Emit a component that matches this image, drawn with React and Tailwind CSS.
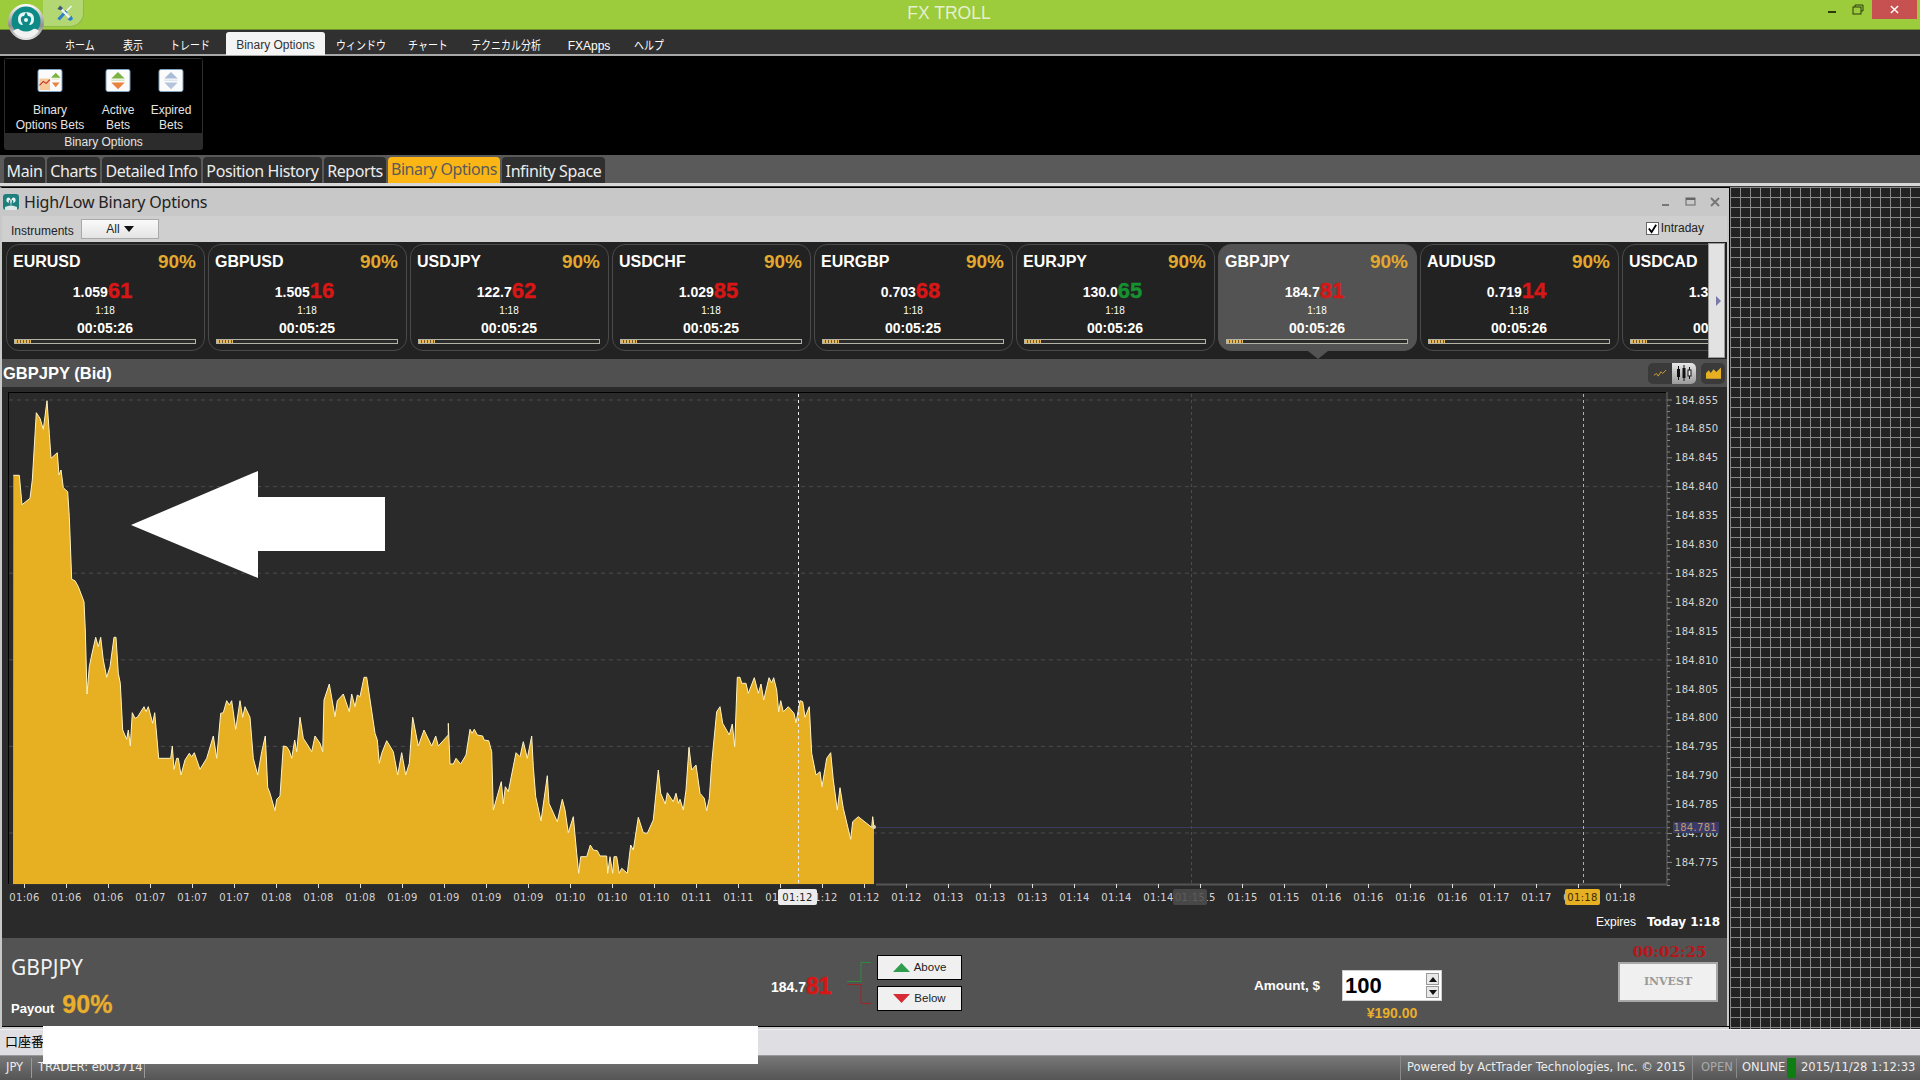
import React from "react";

const Z8 = [[40,256],[58,256],[66,344],[90,325],[97,270],[109,68],[120,85],[130,118],[141,32],[148,130],[153,205],[172,188],[177,255],[183,240],[190,293],[203,305],[208,380],[215,568],[225,572],[235,590],[252,635],[256,720],[261,912],[268,830],[275,795],[287,742],[295,770],[302,742],[310,810],[320,862],[330,830],[342,742],[348,742],[355,850],[361,880],[368,1020],[380,1048],[385,1020],[391,1068],[397,968],[405,985],[412,982],[432,950],[438,965],[445,950],[458,1000],[464,968],[476,1105],[512,1105],[517,1068],[522,1138],[530,1105],[535,1105],[543,1155],[555,1110],[568,1090],[575,1100],[583,1088],[600,1138],[620,1105],[640,1038],[650,1105],[662,970],[670,968],[680,932],[688,945],[695,932],[707,1018],[720,932],[728,982],[735,950],[750,982],[760,1105],[773,1155],[785,1085],[796,1038],[803,1192],[810,1210],[825,1262],[830,1228],[840,1218],[850,1068],[860,1070],[868,1082],[875,1105],[884,1050],[890,1085],[900,982],[910,1045],[925,1068],[935,1085],[945,1038],[960,1060],[968,1085],[972,930],[988,882],[1005,980],[1012,932],[1030,912],[1048,965],[1055,912],[1065,950],[1072,915],[1080,920],[1092,862],[1100,862],[1125,1030],[1132,1050],[1138,1120],[1145,1090],[1160,1052],[1180,1085],[1193,1155],[1205,1088],[1217,1155],[1228,1120],[1238,982],[1255,1068],[1272,1020],[1295,1068],[1307,1038],[1315,1068],[1345,1035],[1345,1000],[1350,1122],[1360,1122],[1368,1105],[1380,1120]];
const Z9 = [[62,372],[78,345],[90,268],[96,280],[103,268],[112,285],[128,288],[132,300],[146,302],[155,335],[160,510],[184,425],[190,492],[196,440],[205,455],[228,338],[240,350],[250,305],[262,355],[275,288],[280,380],[287,470],[303,543],[322,407],[327,490],[352,545],[367,478],[375,510],[385,578],[400,530],[410,640],[416,700],[422,650],[440,650],[451,615],[460,630],[472,632],[480,648],[500,648],[503,700],[510,650],[518,700],[522,650],[530,650],[538,700],[545,685],[562,700],[572,615],[580,630],[595,532],[610,578],[622,580],[640,540],[655,390],[662,460],[676,492],[682,458],[700,485],[708,460],[715,490],[720,478],[730,510],[738,450],[747,322],[755,390],[768,375],[780,460],[793,475],[800,512],[808,475],[815,370],[830,215],[840,200],[848,250],[868,285],[877,252],[884,320],[892,112],[900,112],[905,130],[918,130],[925,160],[943,113],[955,160],[963,132],[971,180],[987,113],[995,128],[1001,113],[1010,150],[1016,215],[1022,182],[1030,215],[1045,200],[1062,220],[1068,248],[1080,182],[1088,185],[1095,232],[1108,200],[1115,340],[1128,405],[1140,395],[1146,440],[1160,355],[1172,338],[1180,420],[1192,510],[1200,443],[1210,505],[1232,598],[1238,545],[1255,530],[1295,562],[1298,530],[1302,562]];
const LINE = [
  ...Z8.map(([x, y]) => [x / 3, 390 + y / 3]),
  ...Z9.map(([x, y]) => [440 + x / 3, 640 + y / 3]),
];
const linePts = LINE.map((p) => p.map((n) => n.toFixed(1)).join(",")).join(" ");
const areaPts = `13,884 ${linePts} 874,884`;

const XLABELS = ["01:06","01:06","01:06","01:07","01:07","01:07","01:08","01:08","01:08","01:09","01:09","01:09","01:09","01:10","01:10","01:10","01:11","01:11","01:11","01:12","01:12","01:12","01:13","01:13","01:13","01:14","01:14","01:14","01:15","01:15","01:15","01:16","01:16","01:16","01:16","01:17","01:17","01:17","01:18"];
const YLABELS = Array.from({ length: 17 }, (_, i) => (184.855 - i * 0.005).toFixed(3));

const CARDS = [
  ["EURUSD", "1.059", "61", "00:05:26"],
  ["GBPUSD", "1.505", "16", "00:05:25"],
  ["USDJPY", "122.7", "62", "00:05:25"],
  ["USDCHF", "1.029", "85", "00:05:25"],
  ["EURGBP", "0.703", "68", "00:05:25"],
  ["EURJPY", "130.0", "65", "00:05:26", "green"],
  ["GBPJPY", "184.7", "81", "00:05:26", "active"],
  ["AUDUSD", "0.719", "14", "00:05:26"],
  ["USDCAD", "1.337", "42", "00:05:26"],
];

const MENU = [
  ["ホーム", "w-[48px]", true],
  ["表示", "w-[58px]", true],
  ["トレード", "w-[56px] mr-[8px]", true],
  ["Binary Options", "w-[99px] h-[23px] mt-[2px] pt-[3px] bg-[#f4f4f4] text-[#333] rounded-t-[3px]"],
  ["ウィンドウ", "w-[72px]", true],
  ["チャート", "w-[62px]", true],
  ["テクニカル分析", "w-[94px]", true],
  ["FXApps", "w-[72px]"],
  ["ヘルプ", "w-[48px]", true],
];

const TABS = [
  ["Main", "w-[41px]"],
  ["Charts", "w-[53px]"],
  ["Detailed Info", "w-[99px]"],
  ["Position History", "w-[119px]"],
  ["Reports", "w-[62px]"],
  ["Binary Options", "w-[112px]", true],
  ["Infinity Space", "w-[103px]"],
];

function Logo() {
  return (
    <svg viewBox="0 0 36 36" className="absolute left-[8px] top-[4px] z-20 w-[36px] h-[36px]">
      <defs>
        <linearGradient id="ring" x1="0" y1="0" x2="0" y2="1">
          <stop offset="0" stopColor="#ffffff" />
          <stop offset="0.6" stopColor="#8e8e8e" />
          <stop offset="1" stopColor="#e8e8e8" />
        </linearGradient>
      </defs>
      <circle cx="18" cy="18" r="18" fill="url(#ring)" />
      <circle cx="18" cy="17" r="14.5" fill="#0d8a86" />
      <path d="M5 27 Q10 23 12 26 Q18 29 24 26 Q27 23 31 27 Q26 34 18 34 Q10 34 5 27Z" fill="#f2f2f2" />
      <path d="M18 8 Q10 8 10 15 Q10 21 15 21 L13 17 Q12 12 16 12 Z" fill="#eaf6f5" />
      <path d="M18 8 Q26 8 26 15 Q26 21 21 21 L23 17 Q24 12 20 12 Z" fill="#eaf6f5" />
      <circle cx="18" cy="16" r="2" fill="#eaf6f5" />
    </svg>
  );
}

function Tools() {
  return (
    <svg viewBox="0 0 16 16" className="w-[16px] h-[16px] absolute left-[14px] top-[5px]">
      <path d="M1.5 14.5 L9.5 6" stroke="#2f80c8" strokeWidth="3.2" />
      <path d="M9.5 6 L14.5 1" stroke="#f0f4f8" strokeWidth="1.6" />
      <path d="M3 3 L13 13" stroke="#eef3f6" strokeWidth="2.4" />
      <path d="M0.5 4 L3 0.5 L6 3 L4 5.5Z" fill="#3f5a78" />
      <path d="M10.5 14.5 L14.5 10.5 L16 14 L13.5 16Z" fill="#2f80c8" />
    </svg>
  );
}

function RibbonIcon({ kind }) {
  const up = kind === "expired" ? "#a8bcd8" : "#7cb342";
  const down = kind === "expired" ? "#b4c4dc" : "#e8823c";
  return (
    <svg viewBox="0 0 26 24" className="w-[26px] h-[24px]">
      <rect x="0.5" y="0.5" width="25" height="23" rx="2" fill="#fbfbfb" stroke="#7ea6c4" />
      {kind === "chart" ? (
        <>
          <rect x="2" y="10" width="11" height="12" fill="#f6c99a" />
          <path d="M2 17 L6 13 L9 15 L13 11" stroke="#c8321e" strokeWidth="1.2" fill="none" />
          <path d="M14 9 L19 4 L24 9Z" fill={up} />
          <path d="M15 10 H23 V11 H15Z" fill="#d9e6c0" />
          <path d="M15 14 L19 19 L23 14Z" fill={down} />
        </>
      ) : (
        <>
          <path d="M6 10 L13 3 L20 10Z" fill={up} />
          <rect x="6" y="11" width="14" height="1.5" fill={kind === "expired" ? "#dce4f0" : "#d9e6c0"} />
          <path d="M6 14 L13 21 L20 14Z" fill={down} />
        </>
      )}
    </svg>
  );
}

function Card({ sym, base, big, time, mode }) {
  const active = mode === "active";
  return (
    <div
      className={`w-[199px] h-[107px] shrink-0 rounded-[13px] border px-[7.5px] pt-[7px] ${
        active ? "bg-[#535353] border-[#535353]" : "bg-[#222222] border-[#4a4a4a]"
      }`}
    >
      <div className="flex items-center justify-between h-[20px]">
        <span className="text-[16px] font-bold text-white -ml-[1px]">{sym}</span>
        <span className="text-[19px] font-bold text-[#e3a92f]">90%</span>
      </div>
      <div className="flex items-center justify-center h-[24px] mt-[7px] pr-[5px] font-bold">
        <span className="text-[14px] text-white mt-[3px]">{base}</span>
        <span
          className={`text-[22px] leading-none ${
            mode === "green"
              ? "text-[#17912f] [-webkit-text-stroke:0.4px_#17912f]"
              : "text-[#d81616] [-webkit-text-stroke:0.4px_#d81616]"
          }`}
        >
          {big}
        </span>
      </div>
      <div className="h-[12px] mt-[2px] text-center text-[10px] leading-[12px] text-white">1:18</div>
      <div className="h-[16px] mt-[3px] text-center text-[14px] leading-[16px] font-bold text-white">{time}</div>
      <div className="h-[5px] mt-[3px] border border-[#b3b3a5] bg-[#2a2a2a]">
        <div className="h-full w-[16px] bg-[repeating-linear-gradient(90deg,#e9b85a_0_2px,#6b5a30_2px_3px)]" />
      </div>
    </div>
  );
}

function ChartCanvas() {
  const F = { fontFamily: '"DejaVu Sans", sans-serif', fontSize: 10, letterSpacing: 0.3 };
  return (
    <svg viewBox="2 387 1725 551" className="absolute inset-0 w-full h-full">
      {[400, 486.6, 573.2, 659.8, 746.4, 833].map((y) => (
        <line key={y} x1="9" x2="1666" y1={y} y2={y} stroke="#4a4a4a" strokeDasharray="4 4" />
      ))}
      <line x1="1191.5" x2="1191.5" y1="394" y2="884" stroke="#4c4c4c" strokeDasharray="3 3" />
      <line x1="876" x2="1666" y1="827.5" y2="827.5" stroke="#3b3b5e" />
      <polygon points={areaPts} fill="#e7af22" />
      <polyline points={linePts} fill="none" stroke="#fff3c4" strokeWidth="1" />
      <circle cx="874" cy="827" r="2" fill="#e0d8c0" />
      <line x1="798.5" x2="798.5" y1="394" y2="884" stroke="#f0f0f0" strokeDasharray="3 3" />
      <line x1="1583.5" x2="1583.5" y1="394" y2="884" stroke="#e7af22" strokeDasharray="3 3" />
      <polygon points="131,525 258,471 258,497 385,497 385,551 258,551 258,578" fill="#ffffff" />
      <line x1="8" x2="1666" y1="392.5" y2="392.5" stroke="#000" />
      <line x1="8.5" x2="8.5" y1="392" y2="884" stroke="#000" />
      <line x1="1667" x2="1667" y1="392" y2="885" stroke="#555" strokeWidth="1.5" />
      <line x1="876" x2="1667" y1="884.5" y2="884.5" stroke="#555" strokeWidth="2" />
      <line x1="9" x2="874" y1="884.5" y2="884.5" stroke="#333" />
      {Array.from({ length: 85 }, (_, i) => (
        <line key={i} x1="1667" x2={i % 5 === 0 ? 1672 : 1670} y1={400 + i * 5.78} y2={400 + i * 5.78} stroke="#888" />
      ))}
      {YLABELS.map((t, i) => (
        <text key={t} x="1675" y={403.5 + i * 28.9} fill="#d4d4d4" style={F}>{t}</text>
      ))}
      <rect x="1673" y="822" width="46" height="11" fill="#3a3a68" />
      <text x="1673.5" y="831" fill="#c4996a" style={F}>184.781</text>
      {XLABELS.map((t, i) => (
        <g key={i}>
          <line x1={24.5 + i * 42} x2={24.5 + i * 42} y1="884" y2="888" stroke="#ddd" />
          <text x={24.5 + i * 42} y="900.5" textAnchor="middle" fill="#d4d4d4" style={F}>{t}</text>
        </g>
      ))}
      <rect x="778" y="889" width="39" height="16" rx="2" fill="#ececec" />
      <text x="797.5" y="900.5" textAnchor="middle" fill="#222" style={F}>01:12</text>
      <rect x="1173" y="889" width="34" height="16" rx="2" fill="#484848" />
      <text x="1190" y="900.5" textAnchor="middle" fill="#5e5e5e" style={F}>01:15</text>
      <rect x="1565" y="889" width="35" height="16" rx="2" fill="#e7af22" />
      <text x="1582.5" y="900.5" textAnchor="middle" fill="#3a2c08" style={F}>01:18</text>
    </svg>
  );
}

function HeaderIcons() {
  return (
    <div className="flex items-center gap-[5px] pr-[2px]">
      <div className="flex h-[21px] rounded-[5px] overflow-hidden">
        <div className="w-[24px] bg-[#3a3a3a] flex items-center justify-center">
          <svg viewBox="0 0 16 10" className="w-[14px] h-[9px]">
            <path d="M1 7 L4 5 L6 8 L9 3 L11 5 L15 1" stroke="#e0a92e" fill="none" strokeWidth="1" />
          </svg>
        </div>
        <div className="w-[24px] bg-gradient-to-b from-[#e8e8e8] to-[#9a9a9a] flex items-center justify-center">
          <svg viewBox="0 0 16 16" className="w-[16px] h-[16px]">
            <path d="M2.5 1 V15 M8 0 V16 M13.5 2 V14" stroke="#111" />
            <rect x="1" y="4" width="3" height="8" fill="#111" />
            <rect x="6.5" y="3" width="3" height="10" fill="#111" />
            <rect x="12" y="5" width="3" height="6" fill="#eee" stroke="#111" />
          </svg>
        </div>
      </div>
      <div className="w-[24px] h-[21px] rounded-[5px] bg-[#3a3a3a] flex items-center justify-center">
        <svg viewBox="0 0 16 12" className="w-[15px] h-[12px]">
          <path d="M0 6 L3 3 L5 6 L8 2 L11 5 L16 0 V12 H0Z" fill="#e7af22" />
        </svg>
      </div>
    </div>
  );
}

export default function App() {
  const sans = { fontFamily: '"Liberation Sans", "Noto Sans CJK JP", sans-serif' };
  const ui = { fontFamily: '"Noto Sans", "Noto Sans CJK JP", sans-serif' };
  const dv = { fontFamily: '"DejaVu Sans", "Noto Sans CJK JP", sans-serif' };
  const serif = { fontFamily: '"DejaVu Serif", serif' };
  return (
    <div className="relative w-[1920px] h-[1080px] overflow-hidden flex flex-col bg-black" style={sans}>
      {/* title bar */}
      <div className="relative h-[30px] shrink-0 flex bg-[#9ccb3c] border-b border-[#6d8f2a]">
        <Logo />
        <div className="absolute left-[43px] top-0 w-[41px] h-[27px] bg-[#b3d873] border-r border-b border-[#8fb84a] rounded-br-[14px]">
          <Tools />
        </div>
        <div className="w-[100px]" />
        <div className="flex-1 text-center text-[17.5px] leading-[27px] text-[#e6f0cc]">FX TROLL</div>
        <div className="w-[122px] flex justify-end items-start">
          <svg viewBox="0 0 36 20" className="w-[36px] h-[20px] mr-[8px]">
            <rect x="0" y="11" width="8" height="2" fill="#2c3a10" />
            <rect x="25" y="7" width="8" height="7" fill="none" stroke="#2c3a10" />
            <path d="M27 7 V5 H35 V11 H33" fill="none" stroke="#2c3a10" />
          </svg>
          <div className="w-[45px] h-[19px] mr-[3px] bg-[#c75050] flex items-center justify-center">
            <svg viewBox="0 0 10 10" className="w-[9px] h-[9px]">
              <path d="M1 1 L9 9 M9 1 L1 9" stroke="#fff" strokeWidth="1.6" />
            </svg>
          </div>
        </div>
      </div>

      {/* menu */}
      <div className="h-[26px] shrink-0 flex pl-[56px] bg-[#303030] border-b-2 border-[#a8a8a8] text-[12px] text-white">
        {MENU.map(([t, c, jp]) => (
          <div key={t} className={`${c} ${jp || t === "FXApps" ? "pt-[7px]" : ""} flex items-center justify-center whitespace-nowrap`}>
            {jp ? <span className="inline-block scale-x-[0.83]">{t}</span> : t}
          </div>
        ))}
      </div>

      {/* ribbon */}
      <div className="h-[99px] shrink-0 bg-black pt-[2px] pl-[4px]">
        <div className="w-[199px] h-[92px] rounded-[3px] bg-[#2c2c2c] p-[1px] flex flex-col text-[12px] leading-[15px] text-[#e4e4e4]">
          <div className="h-[74px] bg-black flex pl-[7px] pt-[10px]">
            {[
              ["chart", "w-[76px]", "Binary", "Options Bets"],
              ["active", "w-[60px]", "Active", "Bets"],
              ["expired", "w-[46px]", "Expired", "Bets"],
            ].map(([k, w, a, b]) => (
              <div key={k} className={`${w} flex flex-col items-center whitespace-nowrap`}>
                <RibbonIcon kind={k} />
                <div className="mt-[11px] text-center">{a}<br />{b}</div>
              </div>
            ))}
          </div>
          <div className="flex-1 text-center leading-[19px]">Binary Options</div>
        </div>
      </div>

      {/* tabs */}
      <div className="h-[31px] shrink-0 flex gap-[2px] pl-[4px] pt-[2px] bg-[#5a5a5a] border-b-[3px] border-[#d8d8d8] text-[16px]" style={ui}>
        {TABS.map(([t, w, on]) => (
          <div
            key={t}
            className={`${w} h-[26px] rounded-t-[4px] flex justify-center whitespace-nowrap tracking-[-0.4px] ${
              on ? "bg-[#fbb616] text-[#5a5a5a] items-start leading-[24px]" : "bg-[#2f2f2f] text-[#ececec] items-center pt-[2px]"
            }`}
          >
            {t}
          </div>
        ))}
      </div>
      <div className="h-[1px] shrink-0 bg-[#3a3a3a]" />

      {/* main */}
      <div className="flex-1 flex min-h-0">
        <div className="w-[1730px] shrink-0 flex flex-col border-t border-r border-black border-l-2 border-l-[#c8c8c8]">
          <div className="flex-1 min-h-0 flex flex-col border-r-2 border-[#c8c8c8] bg-[#2a2a2a]">
            {/* window title */}
            <div className="h-[28px] shrink-0 bg-[#c8c8c8] flex items-center pl-[1px] text-[#222]">
              <svg viewBox="0 0 16 16" className="w-[16px] h-[16px]">
                <rect width="16" height="16" rx="3" fill="#1f7f7c" />
                <path d="M4 4 Q7 2 8 7 Q9 2 12 4 Q14 8 10 9 Q11 6 9 6 L8 12 L7 6 Q5 6 6 9 Q2 8 4 4Z" fill="#e8f4f2" />
                <path d="M2 13 Q8 10 14 13 V16 H2Z" fill="#dfe8e8" />
              </svg>
              <span className="ml-[5px] text-[16px] tracking-[-0.2px] -mt-[1px]" style={ui}>High/Low Binary Options</span>
              <div className="ml-auto flex items-center pr-[7px]">
                <svg viewBox="0 0 58 10" className="w-[58px] h-[10px]">
                  <rect x="0" y="7" width="7" height="2" fill="#777" />
                  <rect x="24" y="1" width="9" height="7" fill="none" stroke="#666" />
                  <rect x="24" y="1" width="9" height="2" fill="#666" />
                  <path d="M49 1 L57 9 M57 1 L49 9" stroke="#777" strokeWidth="2" />
                </svg>
              </div>
            </div>
            {/* toolbar */}
            <div className="h-[26px] shrink-0 bg-[#cfcfcf] flex items-center pl-[9px] pr-[23px] text-[12px] text-[#222]">
              <span className="w-[57px] mt-[4px]">Instruments</span>
              <div className="ml-[13px] w-[78px] h-[20px] border border-[#a9a9a9] bg-gradient-to-b from-[#fafafa] to-[#e4e4e4] flex items-center justify-center gap-[4px]">
                <span>All</span>
                <svg viewBox="0 0 10 6" className="w-[10px] h-[6px]"><path d="M0 0 H10 L5 6Z" fill="#111" /></svg>
              </div>
              <div className="ml-auto flex items-center gap-[2px] -mt-[2px]">
                <span className="w-[13px] h-[13px] bg-white border border-[#666] flex items-center justify-center">
                  <svg viewBox="0 0 12 12" className="w-[11px] h-[11px]"><path d="M2 6 L5 10 L10 2" stroke="#000" strokeWidth="2" fill="none" /></svg>
                </span>
                <span>Intraday</span>
              </div>
            </div>
            {/* ticker */}
            <div className="relative h-[117px] shrink-0 bg-[#222222] flex">
              <div className="w-[1706px] shrink-0 overflow-hidden flex gap-[3px] pl-[3.5px] pt-[2px]">
                {CARDS.map(([s, b, g, t, m]) => (
                  <Card key={s} sym={s} base={b} big={g} time={t} mode={m} />
                ))}
              </div>
              <div className="w-[17px] h-[115px] mt-[1px] bg-[#e2e2e2] border border-[#9a9a9a] flex items-center justify-center">
                <svg viewBox="0 0 5 10" className="w-[5px] h-[10px] ml-[3px]"><path d="M0 0 L5 5 L0 10Z" fill="#7a7aa8" /></svg>
              </div>
              <svg viewBox="0 0 20 8" className="absolute left-[1306px] bottom-0 w-[20px] h-[8px]"><path d="M0 0 H20 L10 8Z" fill="#535353" /></svg>
            </div>
            {/* chart header */}
            <div className="h-[28px] shrink-0 bg-[#505050] flex items-center justify-between pl-[1px]">
              <span className="text-[16.5px] font-bold text-white mt-[1px]">GBPJPY (Bid)</span>
              <HeaderIcons />
            </div>
            {/* chart */}
            <div className="relative h-[551px] shrink-0 bg-[#2a2a2a]">
              <ChartCanvas />
              <div className="absolute right-[7px] bottom-[7px] flex items-center gap-[11px] text-white">
                <span className="text-[12px]">Expires</span>
                <span className="text-[12px] font-bold" style={dv}>Today 1:18</span>
              </div>
            </div>
            {/* order panel */}
            <div className="flex-1 bg-[#535353] flex text-white">
              <div className="w-[769px] pl-[9px] pt-[14px]">
                <div className="h-[30px] text-[21px] leading-[30px] text-[#f2f2f2]" style={ui}>GBPJPY</div>
                <div className="flex items-baseline gap-[8px] mt-[8px]">
                  <span className="text-[13px] font-bold">Payout</span>
                  <span className="text-[25px] leading-[28px] font-bold text-[#e9ae2c] [-webkit-text-stroke:0.3px_#e9ae2c]">90%</span>
                </div>
              </div>
              <div className="w-[62px] mt-[35px] h-[26px] flex items-center font-bold">
                <span className="text-[14px] mt-[2px]">184.7</span>
                <span className="text-[23px] text-[#d81616] [-webkit-text-stroke:0.4px_#d81616]">81</span>
              </div>
              <svg viewBox="0 0 24 44" className="w-[24px] h-[44px] ml-[14px] mt-[24px]">
                <path d="M0 19.5 H14 V0.5 H24" stroke="#2e8b3c" fill="none" />
                <path d="M0 22.5 H14 V41.5 H24" stroke="#a02626" fill="none" />
              </svg>
              <div className="ml-[6px] mt-[17px] w-[85px] flex flex-col gap-[6px] text-[11.5px] text-[#222]">
                <div className="h-[25px] bg-[#f0f0f0] border border-black flex items-center justify-center gap-[4px]">
                  <svg viewBox="0 0 17 9" className="w-[17px] h-[9px]"><path d="M0 9 L8.5 0 L17 9Z" fill="#2e9e4e" /></svg>
                  <span>Above</span>
                </div>
                <div className="h-[25px] bg-[#f0f0f0] border border-black flex items-center justify-center gap-[4px]">
                  <svg viewBox="0 0 17 9" className="w-[17px] h-[9px]"><path d="M0 0 L8.5 9 L17 0Z" fill="#d62b35" /></svg>
                  <span>Below</span>
                </div>
              </div>
              <div className="ml-[292px] w-[66px] mt-[39px] h-[18px] text-[13.5px] font-bold whitespace-nowrap leading-[18px]">Amount, $</div>
              <div className="ml-[22px] w-[100px] mt-[32px] flex flex-col items-center">
                <div className="w-full h-[31px] bg-white border border-[#cfcfcf] flex items-center justify-between pl-[2px] pr-[2px]">
                  <span className="text-[22px] font-bold text-black leading-none">100</span>
                  <div className="flex flex-col gap-[1px]">
                    <span className="w-[13px] h-[12px] bg-[#e8e8e8] border border-[#999] flex items-center justify-center">
                      <svg viewBox="0 0 8 5" className="w-[8px] h-[5px]"><path d="M0 5 L4 0 L8 5Z" fill="#111" /></svg>
                    </span>
                    <span className="w-[13px] h-[12px] bg-[#e8e8e8] border border-[#999] flex items-center justify-center">
                      <svg viewBox="0 0 8 5" className="w-[8px] h-[5px]"><path d="M0 0 L4 5 L8 0Z" fill="#111" /></svg>
                    </span>
                  </div>
                </div>
                <div className="mt-[5px] h-[14px] text-[14px] leading-[14px] font-bold text-[#e9ae2c]">¥190.00</div>
              </div>
              <div className="ml-[176px] w-[100px] mt-[5px] flex flex-col items-center">
                <div className="h-[18px] pl-[3px] text-[15px] leading-[18px] font-bold text-[#b21818]" style={serif}>00:02:25</div>
                <div className="mt-[1px] w-full h-[40px] bg-[#f0f0f0] border-2 border-[#a8a8a8] flex items-center justify-center text-[11px] font-bold text-[#9a9a9a]" style={serif}>INVEST</div>
              </div>
            </div>
          </div>
          <div className="h-[1px] shrink-0 bg-black" />
          <div className="h-[2px] shrink-0 bg-[#cfcfcf]" />
        </div>
        <div className="flex-1 bg-[#222222] bg-[linear-gradient(#8a8a8a_1px,transparent_1px),linear-gradient(90deg,#8a8a8a_1px,transparent_1px)] bg-[size:10px_10px]" />
      </div>

      {/* status row */}
      <div className="h-[26px] shrink-0 bg-[#dfdfe3] border-t border-[#efefef] flex items-center pl-[5px] pb-[2px] text-[13px] text-black">
        口座番号
      </div>

      {/* footer */}
      <div className="h-[25px] shrink-0 flex items-center bg-gradient-to-b from-[#787878] to-[#555555] border-t border-[#9a9a9a] text-[11.5px] text-[#ececec] whitespace-nowrap" style={dv}>
        <span className="w-[25px] pl-[6px] box-content">JPY</span>
        <span className="w-px h-[20px] bg-[#999]" />
        <span className="w-[112px] pl-[6px]">TRADER: eb03714</span>
        <span className="w-px h-[20px] bg-[#999]" />
        <span className="ml-auto w-px h-[24px] bg-[#8a8a8a]" />
        <span className="w-[291px] pl-[6px]">Powered by ActTrader Technologies, Inc. © 2015</span>
        <span className="w-px h-[24px] bg-[#8a8a8a]" />
        <span className="w-[43px] pl-[8px] text-[#aaaaaa]">OPEN</span>
        <span className="w-px h-[20px] bg-[#8a8a8a]" />
        <span className="w-[50px] pl-[5px]">ONLINE</span>
        <span className="w-[9px] h-[20px] bg-[#0e7d12]" />
        <span className="w-[124px] pl-[5px]">2015/11/28 1:12:33</span>
      </div>

      {/* redaction block */}
      <div className="absolute left-[43px] top-[1026px] w-[715px] h-[38px] bg-white z-30" />
    </div>
  );
}
